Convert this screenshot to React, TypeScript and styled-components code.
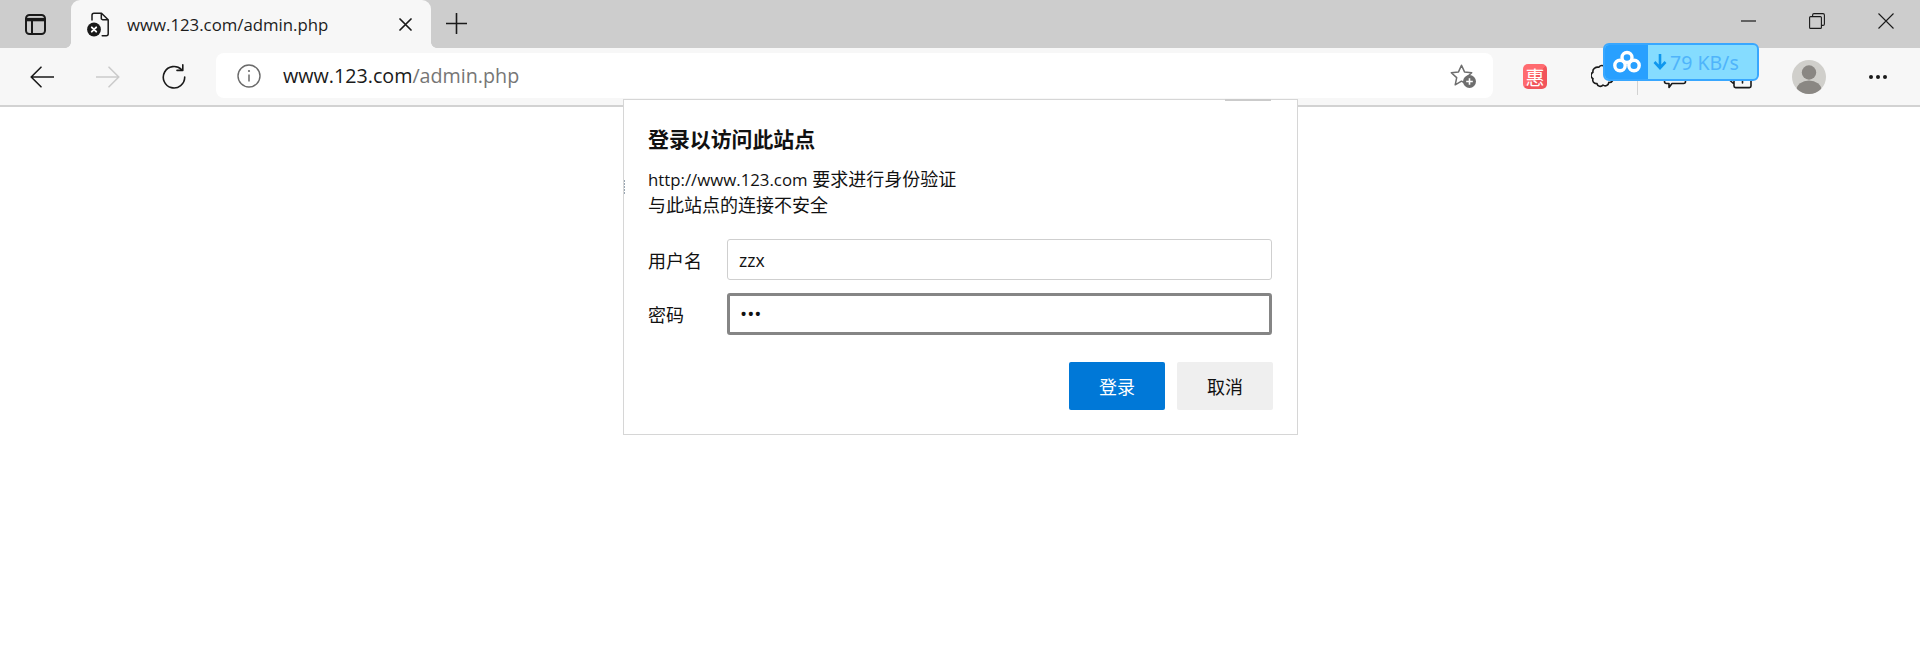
import React from "react";
import styled, { createGlobalStyle } from "styled-components";

const Global = createGlobalStyle`
  html, body { margin: 0; padding: 0; background: #fff; }
  body { font-family: "Open Sans", "Noto Sans CJK SC", sans-serif; color: #1a1a1a; }
  * { box-sizing: border-box; }
`;

const Page = styled.div`
  position: relative;
  width: 1920px;
  height: 650px;
  overflow: hidden;
  background: #fff;
  display: flex;
  flex-direction: column;
`;

const TabStrip = styled.div`
  height: 48px;
  background: #cdcdcd;
  display: flex;
  align-items: stretch;
  flex: none;
`;

const VerticalTabs = styled.div`
  width: 71px;
  display: flex;
  align-items: center;
  justify-content: center;
  flex: none;
`;

const Tab = styled.div`
  position: relative;
  width: 360px;
  background: #f7f7f7;
  border-radius: 9px 9px 0 0;
  display: flex;
  align-items: center;
  padding-left: 16px;
  flex: none;
  &::before, &::after {
    content: "";
    position: absolute;
    bottom: 0;
    width: 6px;
    height: 6px;
  }
  &::before { left: -6px; background: radial-gradient(circle at 0 0, transparent 5.6px, #f7f7f7 6.2px); }
  &::after { right: -6px; background: radial-gradient(circle at 100% 0, transparent 5.6px, #f7f7f7 6.2px); }
`;

const TabTitle = styled.span`
  margin-left: 17px;
  flex: 1;
  font-size: 16.8px;
  color: #1c1c1c;
  white-space: nowrap;
`;

const TabClose = styled.div`
  width: 13px;
  height: 13px;
  margin-right: 19px;
  display: flex;
  flex: none;
`;

const NewTab = styled.div`
  margin-left: 15px;
  display: flex;
  align-items: center;
  flex: none;
  padding-bottom: 2px;
`;

const WindowControls = styled.div`
  margin-left: auto;
  display: flex;
  align-items: center;
  padding-bottom: 6px;
  flex: none;
`;

const WindowButton = styled.div<{ $w: number }>`
  width: ${(p) => p.$w}px;
  display: flex;
  justify-content: center;
  align-items: center;
`;

const Toolbar = styled.div`
  height: 59px;
  background: #f7f7f7;
  border-bottom: 2px solid #d2d2d2;
  display: flex;
  align-items: center;
  padding-left: 9px;
  padding-right: 12px;
  flex: none;
`;

const NavSlot = styled.div<{ $w?: number }>`
  width: ${(p) => p.$w ?? 66}px;
  height: 40px;
  display: flex;
  align-items: center;
  justify-content: center;
  flex: none;
`;

const AddressBar = styled.div`
  flex: 1;
  height: 45px;
  margin: 0 8px 2px 9px;
  background: #fff;
  border-radius: 8px;
  display: flex;
  align-items: center;
  padding-left: 21px;
  padding-right: 17px;
`;

const Url = styled.div`
  margin-left: 22px;
  flex: 1;
  font-size: 19.7px;
  color: #1a1a1a;
  white-space: nowrap;
  & > span { color: #767676; }
`;

const PromoBadge = styled.div`
  width: 24px;
  height: 25px;
  border-radius: 5px;
  background: linear-gradient(135deg, #ff6b70 0 50%, #f2545b 50% 100%);
  color: #fff;
  font-family: "Noto Sans CJK SC", sans-serif;
  font-size: 19px;
  line-height: 25px;
  text-align: center;
`;

const Separator = styled.div`
  width: 1px;
  height: 15px;
  margin: 21px 0 0 0;
  background: #d2d2d2;
  flex: none;
`;

const Dialog = styled.div`
  position: absolute;
  left: 623px;
  top: 99px;
  width: 675px;
  height: 336px;
  background: #fff;
  border: 1px solid #d6d6d6;
  padding: 25px 24px 24px 24px;
  color: #111;
  font-family: "Open Sans", "Noto Sans CJK SC", sans-serif;
  &::before {
    content: "";
    position: absolute;
    left: 601px;
    top: -1px;
    width: 46px;
    height: 2px;
    background: #cbcbcb;
  }
  &::after {
    content: "";
    position: absolute;
    left: 0;
    top: 80px;
    width: 1px;
    height: 15px;
    background: repeating-linear-gradient(#9aa7b3 0 2px, #fff 2px 3px);
  }
`;

const Title = styled.h1`
  margin: 0;
  font-size: 20.9px;
  line-height: 28px;
  font-weight: 700;
  color: #111;
`;

const Description = styled.p`
  margin: 13px 0 0;
  font-size: 18px;
  line-height: 26px;
  color: #111;
`;

const Host = styled.span`
  font-size: 16.8px;
  line-height: 1;
`;

const FormRow = styled.label<{ $top: number }>`
  margin-top: ${(p) => p.$top}px;
  display: flex;
  align-items: center;
  font-size: 18px;
`;

const FieldLabel = styled.span`
  width: 79px;
  flex: none;
`;

const Field = styled.input<{ $focused?: boolean }>`
  flex: 1;
  min-width: 0;
  height: ${(p) => (p.$focused ? 42 : 41)}px;
  margin-right: 1px;
  padding: 0 ${(p) => (p.$focused ? 10 : 11)}px;
  background: #fff;
  border: ${(p) => (p.$focused ? "3px solid #858585" : "1px solid #cfcfcf")};
  border-radius: 3px;
  outline: none;
  font-family: "Open Sans", sans-serif;
  font-size: ${(p) => (p.$focused ? 19 : 17.6)}px;
  color: #111;
`;

const Actions = styled.div`
  margin-top: 27px;
  display: flex;
  justify-content: flex-end;
  gap: 12px;
`;

const ActionButton = styled.button<{ $primary?: boolean }>`
  width: 96px;
  height: 48px;
  border: none;
  border-radius: 2px;
  background: ${(p) => (p.$primary ? "#0078d7" : "#efefef")};
  color: ${(p) => (p.$primary ? "#fff" : "#111")};
  font-family: "Noto Sans CJK SC", sans-serif;
  font-size: 18px;
  padding: 0;
`;

const SpeedWidget = styled.div`
  position: absolute;
  left: 1603px;
  top: 43px;
  width: 156px;
  height: 38px;
  display: flex;
  border: 2px solid #38a7ff;
  border-radius: 6px;
  overflow: hidden;
  background: #85dcff;
`;

const SpeedLogo = styled.div`
  width: 43px;
  background: #28a0ff;
  display: flex;
  align-items: center;
  justify-content: center;
  flex: none;
`;

const SpeedInfo = styled.div`
  flex: 1;
  display: flex;
  align-items: center;
  padding-left: 5px;
  gap: 3px;
  font-family: "Noto Sans", sans-serif;
  font-size: 19.5px;
  color: #4fb4fb;
  white-space: nowrap;
`;

const Stroke = { fill: "none", stroke: "#1a1a1a", strokeWidth: 1.6, strokeLinecap: "round", strokeLinejoin: "round" } as const;

function App() {
  return (
    <Page>
      <Global />
      <TabStrip>
        <VerticalTabs>
          <svg width="21" height="21" viewBox="0 0 21 21" {...Stroke} strokeWidth={2}>
            <rect x="1" y="1" width="19" height="19" rx="3.5" />
            <path d="M1.5 5.6h18" strokeWidth={3.4} strokeLinecap="butt" />
            <path d="M7 6v14" />
          </svg>
        </VerticalTabs>
        <Tab>
          <svg width="23" height="25" viewBox="0 0 23 25">
            <path d="M5 8V3.2A2 2 0 0 1 7 1.2h7.5l6.7 6.5v14a2 2 0 0 1-2 2h-4M14.3 1.5v4.7a1.6 1.6 0 0 0 1.6 1.6h5" {...Stroke} strokeWidth={1.5} />
            <circle cx="7" cy="17.5" r="6.9" fill="#1a1a1a" />
            <path d="M4.8 15.3l4.4 4.4M9.2 15.3l-4.4 4.4" stroke="#fff" strokeWidth="1.9" strokeLinecap="round" />
          </svg>
          <TabTitle>www.123.com/admin.php</TabTitle>
          <TabClose>
            <svg width="13" height="13" viewBox="0 0 13 13">
              <path d="M1 1l11 11M12 1L1 12" {...Stroke} strokeWidth={1.7} />
            </svg>
          </TabClose>
        </Tab>
        <NewTab>
          <svg width="21" height="21" viewBox="0 0 21 21">
            <path d="M10.5 .5v20M.5 10.5h20" {...Stroke} strokeWidth={1.6} />
          </svg>
        </NewTab>
        <WindowControls>
          <WindowButton $w={70}>
            <svg width="15" height="2" viewBox="0 0 15 2"><path d="M0 1h15" stroke="#1a1a1a" strokeWidth="1.2" /></svg>
          </WindowButton>
          <WindowButton $w={68}>
            <svg width="16" height="16" viewBox="0 0 16 16" fill="none" stroke="#1a1a1a" strokeWidth="1.1">
              <rect x=".6" y="3.6" width="11.8" height="11.8" rx="1" />
              <path d="M3.6 3.4V2A1.4 1.4 0 0 1 5 .6h9A1.4 1.4 0 0 1 15.4 2v9a1.4 1.4 0 0 1-1.4 1.4h-1.4" />
            </svg>
          </WindowButton>
          <WindowButton $w={69}>
            <svg width="16" height="16" viewBox="0 0 16 16"><path d="M.5.5l15 15M15.5.5l-15 15" stroke="#1a1a1a" strokeWidth="1.1" /></svg>
          </WindowButton>
        </WindowControls>
      </TabStrip>
      <Toolbar>
        <NavSlot>
          <svg width="24" height="22" viewBox="0 0 24 22"><path d="M23.5 11H1.5M11 1.2L1.2 11l9.8 9.8" {...Stroke} strokeWidth={1.6} /></svg>
        </NavSlot>
        <NavSlot>
          <svg width="24" height="22" viewBox="0 0 24 22"><path d="M.5 11h22M13 1.2l9.8 9.8-9.8 9.8" {...Stroke} stroke="#cbcbcb" strokeWidth={1.6} /></svg>
        </NavSlot>
        <NavSlot>
          <svg width="24" height="25" viewBox="0 0 24 25">
            <path d="M19.5 5.6A10.7 10.7 0 1 0 22.7 13" {...Stroke} strokeWidth={1.6} />
            <path d="M20.8 .8v5.6h-5.8" {...Stroke} strokeWidth={1.6} />
          </svg>
        </NavSlot>
        <AddressBar>
          <svg width="24" height="24" viewBox="0 0 24 24" fill="none">
            <circle cx="12" cy="12" r="11" stroke="#6a6a6a" strokeWidth="1.4" />
            <path d="M12 10.4v7.2" stroke="#6a6a6a" strokeWidth="1.5" />
            <circle cx="12" cy="7" r="1.1" fill="#6a6a6a" />
          </svg>
          <Url>www.123.com<span>/admin.php</span></Url>
          <svg width="26" height="24" viewBox="0 0 26 24">
            <path d="M11.5 1.2l3 6.7 7.2.8-5.4 4.9 1.5 7.2-6.3-3.6-6.3 3.6 1.5-7.2L1.3 8.7l7.2-.8z" fill="none" stroke="#6e6e6e" strokeWidth="1.5" strokeLinejoin="round" />
            <circle cx="19.5" cy="17.5" r="6.5" fill="#6e6e6e" />
            <path d="M19.5 14.2v6.6M16.2 17.5h6.6" stroke="#fff" strokeWidth="1.6" />
          </svg>
        </AddressBar>
        <NavSlot $w={68}>
          <PromoBadge>惠</PromoBadge>
        </NavSlot>
        <NavSlot $w={68}>
          <svg width="24" height="25" viewBox="0 0 24 25">
            <path d="M8 3.2c1.5-2.4 5-2.2 6 .8 2.6-1 5.4 1 5 3.8 3-.2 4.6 3.2 2.4 5.4 1.6 2.6-.6 5.8-3.6 5.2-.2 3-3.6 4.4-5.8 2.6-1.8 2.4-5.6 1.6-6-1.4-3 .4-5-2.4-4-5-2.6-1.4-2.6-5 0-6.4-.8-3 2.4-5.6 6-5z" {...Stroke} />
          </svg>
        </NavSlot>
        <Separator />
        <NavSlot $w={74}>
          <svg width="24" height="24" viewBox="0 0 24 24">
            <path d="M6 22.5l3-4h11.5a2 2 0 0 0 2-2V3a2 2 0 0 0-2-2H3.5a2 2 0 0 0-2 2v13.5a2 2 0 0 0 2 2H6zM7 8h10M7 13h10" {...Stroke} />
          </svg>
        </NavSlot>
        <NavSlot $w={58}>
          <svg width="26" height="24" viewBox="0 0 26 24">
            <path d="M1.5 15l4.5 4V10.5h17V21a1.6 1.6 0 0 1-1.6 1.6H7.6A1.6 1.6 0 0 1 6 21v-2M14.5 18V4M10.5 7.5l4-4.5 4 4.5" {...Stroke} />
          </svg>
        </NavSlot>
        <NavSlot $w={78}>
          <svg width="34" height="34" viewBox="0 0 34 34">
            <defs><clipPath id="avatarClip"><circle cx="17" cy="17" r="17" /></clipPath></defs>
            <circle cx="17" cy="17" r="17" fill="#d0cfcb" />
            <g clipPath="url(#avatarClip)" fill="#8a8783">
              <circle cx="17" cy="12.5" r="7.2" />
              <ellipse cx="17" cy="30" rx="12.5" ry="9.5" />
            </g>
          </svg>
        </NavSlot>
        <NavSlot $w={60}>
          <svg width="20" height="6" viewBox="0 0 20 6" fill="#1a1a1a">
            <circle cx="3" cy="3" r="2" /><circle cx="10" cy="3" r="2" /><circle cx="17" cy="3" r="2" />
          </svg>
        </NavSlot>
      </Toolbar>
      <Dialog>
        <Title>登录以访问此站点</Title>
        <Description>
          <Host>http://www.123.com</Host> 要求进行身份验证<br />与此站点的连接不安全
        </Description>
        <FormRow $top={21}>
          <FieldLabel>用户名</FieldLabel>
          <Field type="text" defaultValue="zzx" readOnly />
        </FormRow>
        <FormRow $top={13}>
          <FieldLabel>密码</FieldLabel>
          <Field $focused type="password" defaultValue="123" readOnly />
        </FormRow>
        <Actions>
          <ActionButton $primary>登录</ActionButton>
          <ActionButton>取消</ActionButton>
        </Actions>
      </Dialog>
      <SpeedWidget>
        <SpeedLogo>
          <svg width="30" height="24" viewBox="0 0 30 24" fill="none" stroke="#fff" strokeWidth="3.4">
            <circle cx="15" cy="7.5" r="5" />
            <circle cx="8" cy="15.5" r="5.2" />
            <circle cx="22" cy="15.5" r="5.2" />
          </svg>
        </SpeedLogo>
        <SpeedInfo>
          <svg width="14" height="16" viewBox="0 0 14 16" fill="none" stroke="#0f97ee" strokeWidth="2.6">
            <path d="M7 0v13M1.5 8L7 14l5.5-6" />
          </svg>
          79 KB/s
        </SpeedInfo>
      </SpeedWidget>
    </Page>
  );
}

export default App;
